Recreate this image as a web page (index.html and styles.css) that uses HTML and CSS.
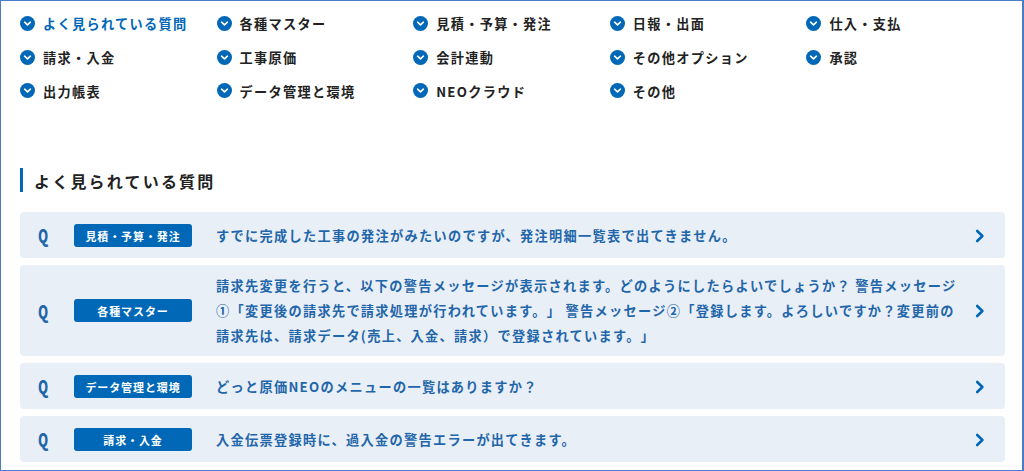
FILE: index.html
```html
<!DOCTYPE html>
<html lang="ja">
<head>
<meta charset="utf-8">
<title>よく見られている質問</title>
<link rel="stylesheet" href="styles.css">
</head>
<body>
<div class="frame">
  <svg width="0" height="0" class="defs"><defs>
    <symbol id="down" viewBox="0 0 15 15"><circle cx="7.5" cy="7.5" r="7.5" fill="#0068b7"/><path d="M4.6 6.2 7.5 8.9 10.4 6.2" fill="none" stroke="#fff" stroke-width="1.6" stroke-linecap="round" stroke-linejoin="round"/></symbol>
    <symbol id="right" viewBox="0 0 10 14"><path d="M2.2 2 7.4 7 2.2 12" fill="none" stroke="#0068b7" stroke-width="2.6" stroke-linecap="round" stroke-linejoin="round"/></symbol>
  </defs></svg>
  <nav class="cats">
    <a class="cat current"><svg class="cat-icon"><use href="#down"/></svg>よく見られている質問</a>
    <a class="cat"><svg class="cat-icon"><use href="#down"/></svg>各種マスター</a>
    <a class="cat"><svg class="cat-icon"><use href="#down"/></svg>見積・予算・発注</a>
    <a class="cat"><svg class="cat-icon"><use href="#down"/></svg>日報・出面</a>
    <a class="cat"><svg class="cat-icon"><use href="#down"/></svg>仕入・支払</a>
    <a class="cat"><svg class="cat-icon"><use href="#down"/></svg>請求・入金</a>
    <a class="cat"><svg class="cat-icon"><use href="#down"/></svg>工事原価</a>
    <a class="cat"><svg class="cat-icon"><use href="#down"/></svg>会計連動</a>
    <a class="cat"><svg class="cat-icon"><use href="#down"/></svg>その他オプション</a>
    <a class="cat"><svg class="cat-icon"><use href="#down"/></svg>承認</a>
    <a class="cat"><svg class="cat-icon"><use href="#down"/></svg>出力帳表</a>
    <a class="cat"><svg class="cat-icon"><use href="#down"/></svg>データ管理と環境</a>
    <a class="cat"><svg class="cat-icon"><use href="#down"/></svg>NEOクラウド</a>
    <a class="cat"><svg class="cat-icon"><use href="#down"/></svg>その他</a>
  </nav>
  <h2 class="heading">よく見られている質問</h2>
  <ul class="faq">
    <li class="item"><span class="q">Q</span><span class="tag">見積・予算・発注</span><p class="text">すでに完成した工事の発注がみたいのですが、発注明細一覧表で出てきません。</p><svg class="arrow"><use href="#right"/></svg></li>
    <li class="item"><span class="q">Q</span><span class="tag">各種マスター</span><p class="text">請求先変更を行うと、以下の警告メッセージが表示されます。どのようにしたらよいでしょうか？ 警告メッセージ①「変更後の請求先で請求処理が行われています。」 警告メッセージ②「登録します。よろしいですか？変更前の請求先は、請求データ(売上、入金、請求）で登録されています。」</p><svg class="arrow"><use href="#right"/></svg></li>
    <li class="item"><span class="q">Q</span><span class="tag">データ管理と環境</span><p class="text">どっと原価NEOのメニューの一覧はありますか？</p><svg class="arrow"><use href="#right"/></svg></li>
    <li class="item"><span class="q">Q</span><span class="tag">請求・入金</span><p class="text">入金伝票登録時に、過入金の警告エラーが出てきます。</p><svg class="arrow"><use href="#right"/></svg></li>
  </ul>
</div>
</body>
</html>
```
FILE: styles.css
```css
html, body {
  margin: 0;
  padding: 0;
  background: #fff;
}
.frame {
  box-sizing: border-box;
  width: 1024px;
  height: 471px;
  overflow: hidden;
  border: 1px solid #4a7cc7;
  border-right-width: 2px;
  padding: 6px 18px 0 19px;
  font-family: "Noto Sans CJK JP", "Noto Sans", sans-serif;
  font-weight: 700;
  color: #222;
  text-spacing-trim: space-all;
}
.defs {
  position: absolute;
}
.cats {
  display: grid;
  grid-template-columns: repeat(5, 196.6px);
  grid-auto-rows: 33.8px;
}
.cat {
  display: flex;
  align-items: center;
  gap: 8px;
  font-size: 13.2px;
  letter-spacing: 1.3px;
  line-height: 33px;
  white-space: nowrap;
}
.cat.current {
  color: #0068b7;
}
.cat-icon {
  width: 15px;
  height: 15px;
  flex: none;
  margin-bottom: 1px;
}
.heading {
  margin: 59.6px 0 20px;
  height: 24px;
  border-left: 3px solid #0068b7;
  padding-left: 11px;
  font-size: 16px;
  line-height: 26px;
  letter-spacing: 2.2px;
  font-weight: 700;
}
.faq {
  list-style: none;
  margin: 0;
  padding: 0;
  width: 985px;
  display: flex;
  flex-direction: column;
  gap: 6.5px;
}
.item {
  display: flex;
  align-items: center;
  min-height: 46.5px;
  box-sizing: border-box;
  background: #e9eff6;
  border-radius: 4px;
  padding: 8.25px 20px 8.25px 18px;
  color: #1f66aa;
}
.q {
  width: 36px;
  flex: none;
  font-size: 18px;
  font-weight: 900;
  line-height: 20px;
  color: #1f66aa;
  transform: scaleX(.72);
  transform-origin: left center;
}
.tag {
  width: 118px;
  height: 23px;
  flex: none;
  background: #0068b7;
  border-radius: 3px;
  color: #fff;
  font-size: 11px;
  letter-spacing: .9px;
  line-height: 24px;
  text-align: center;
}
.text {
  flex: 1;
  margin: 0 16px 0 24px;
  font-size: 13.2px;
  letter-spacing: 1.3px;
  line-height: 25px;
}
.arrow {
  width: 10px;
  height: 14px;
  flex: none;
  margin-top: 1px;
}
```
